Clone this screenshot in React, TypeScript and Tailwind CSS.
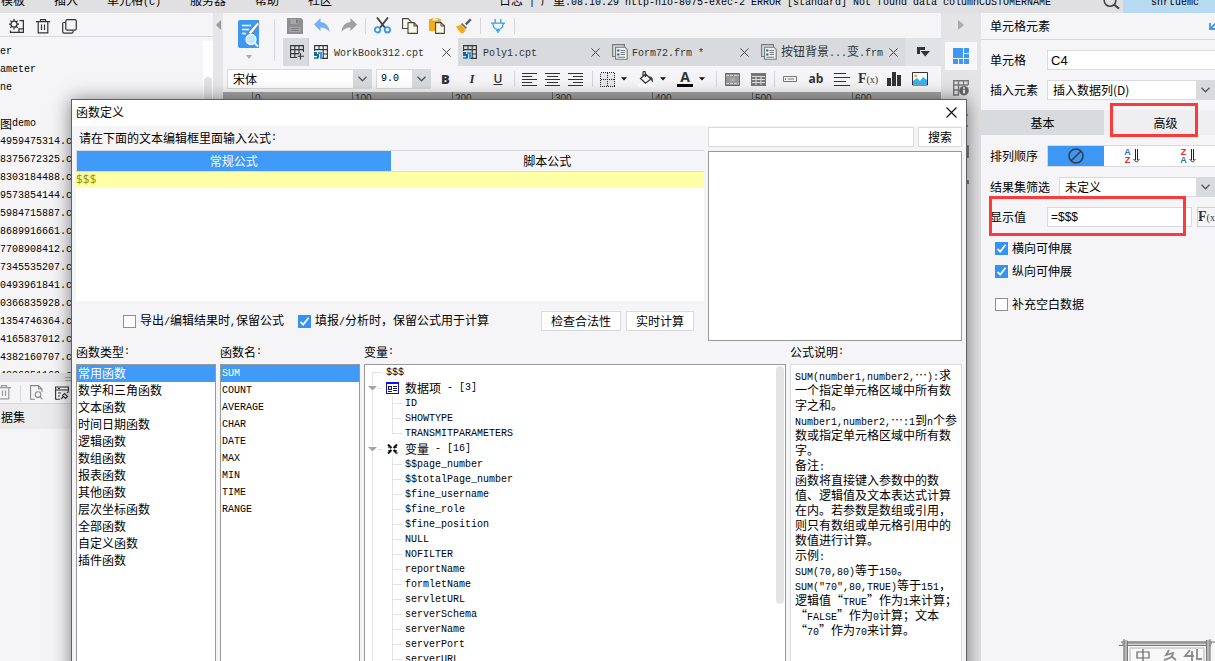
import React, { useState } from 'react';

/** Sets ASCII runs in a half-width face beside the full-width CJK text. */
function T({ s }: { s: string }) {
  return (
    <>
      {s.split(/([\x20-\x7e]+)/).map((part, i) =>
        i % 2 ? (
          <span key={i} className="whitespace-pre font-['Liberation_Mono',monospace] text-[10px]">{part}</span>
        ) : (
          part
        ),
      )}
    </>
  );
}

function Cross({ size = 9, color = '#444' }: { size?: number; color?: string }) {
  return (
    <svg width={size} height={size} viewBox="0 0 10 10" stroke={color} strokeWidth="1.1" fill="none">
      <path d="M.5 .5 9.5 9.5M9.5 .5 .5 9.5" />
    </svg>
  );
}

function Chevron() {
  return (
    <svg width="9" height="6" viewBox="0 0 9 6" fill="none" stroke="#555" strokeWidth="1.3">
      <path d="M.5 .8 4.5 4.8 8.5 .8" />
    </svg>
  );
}

function Drop({ label, value, className, mono }: { label: string; value: string; className: string; mono?: boolean }) {
  return (
    <div className={`flex h-5 items-stretch border border-[#d8dadd] bg-white ${className}`}>
      <select
        aria-label={label}
        className={
          mono
            ? "min-w-0 flex-1 appearance-none bg-white pl-1 font-['Liberation_Mono',monospace] text-[10px] text-black outline-none"
            : 'min-w-0 flex-1 appearance-none bg-white pl-[5px] text-black outline-none'
        }
      >
        <option>{value}</option>
      </select>
      <span className="flex w-[18px] shrink-0 items-center justify-center bg-[#d8dadd]">
        <Chevron />
      </span>
    </div>
  );
}

function Check({ label, on, className }: { label: string; on?: boolean; className?: string }) {
  const [checked, setChecked] = useState(!!on);
  return (
    <label className={`flex items-center gap-1 whitespace-nowrap ${className ?? ''}`}>
      <span className="grid size-[13px] shrink-0">
        <input
          type="checkbox"
          checked={checked}
          onChange={() => setChecked(!checked)}
          className="size-[13px] appearance-none border border-[#8f8f8f] bg-white [grid-area:1/1] checked:border-[#3492f0] checked:bg-[#3492f0]"
        />
        {checked && (
          <svg width="13" height="13" viewBox="0 0 13 13" className="pointer-events-none [grid-area:1/1]" fill="none" stroke="#fff" strokeWidth="1.7">
            <path d="M2.5 6.8 5.2 9.6 10.6 2.8" />
          </svg>
        )}
      </span>
      <span><T s={label} /></span>
    </label>
  );
}

function Trash({ color = '#333' }: { color?: string }) {
  return (
    <svg width="14" height="15" viewBox="0 0 14 15" fill="none" stroke={color} strokeWidth="1.2">
      <path d="M0 2.6H14M4.5 2.5V.6H9.5V2.5M2.2 2.6V13.9H11.8V2.6M5.5 5.5V11M8.5 5.5V11" />
    </svg>
  );
}

function BookIcon() {
  return (
    <svg width="14" height="14" viewBox="0 0 14 14" fill="none">
      <path d="M.6 6V.6H13.4V13.4H8M.6 4.6H13.4M9 9H13.4M5 .6V5M9.2 .6V13.4" stroke="#333" strokeWidth="1.1" />
      <path d="M0 7H3V11H0Z" fill="#1a66a8" />
      <path d="M4 7H8V14H6V9H4ZM0 12H3V14H0Z" fill="#3599db" />
      <path d="M3 9H5V13L3 14Z" fill="#1a66a8" />
    </svg>
  );
}

function FormIcon() {
  return (
    <svg width="16" height="16" viewBox="0 0 16 16" fill="none">
      <path d="M3.5 12.5H.6V.6H12.4V3" stroke="#777" strokeWidth="1.1" />
      <path d="M3.6 3.2H13L15.2 5.4V15.3H3.6Z" fill="#f1f1f1" stroke="#777" strokeWidth="1.1" />
      <path d="M5.2 5.5H7.4V7.5H5.2ZM5.2 9.5H7.4V11.5H5.2Z" fill="#1a66a8" />
      <path d="M8.6 6.5H13M8.6 8.5H13M8.6 10.5H13M5.5 13.2H13" stroke="#777" strokeWidth="1" />
    </svg>
  );
}

function GridPlus() {
  return (
    <svg width="14" height="15" viewBox="0 0 14 15" fill="none" stroke="#333" strokeWidth="1.1">
      <path d="M7 12.5H.6V.6H13.4V7M.6 4.6H13.4M.6 8.6H9M4.8 .6V12.5M9 .6V8.6M10.5 8V14.5M7.5 11.3H14" />
    </svg>
  );
}

function Lines({ d }: { d: string }) {
  return (
    <svg width="15" height="13" viewBox="0 0 15 13" stroke="#333" strokeWidth="1" shapeRendering="crispEdges">
      <path d={d} />
    </svg>
  );
}

function Sep({ className }: { className: string }) {
  return (
    <span className={`flex shrink-0 justify-center ${className}`}>
      <span className="h-4 w-px bg-[#d5d6d9]" />
    </span>
  );
}

function Tool({ label, className, children }: { label: string; className: string; children: React.ReactNode }) {
  return (
    <button aria-label={label} className={`flex h-6 shrink-0 items-center justify-center text-[#333] ${className}`}>
      {children}
    </button>
  );
}

function More({ label }: { label: string }) {
  return (
    <Tool label={label} className="w-[13px]">
      <svg width="6" height="4" viewBox="0 0 6 4"><path d="M0 .3H6L3 3.6Z" fill="#111" /></svg>
    </Tool>
  );
}

const tree = ['er', 'ameter', 'ne', '', '图demo', '4959475314.cpt', '8375672325.cpt', '8303184488.cpt', '9573854144.cpt', '5984715887.cpt', '8689916661.cpt', '7708908412.cpt', '7345535207.cpt', '0493961841.cpt', '0366835928.cpt', '1354746364.cpt', '4165837012.cpt', '4382160707.cpt', '4396851169.cpt'];
const types = ['常用函数', '数学和三角函数', '文本函数', '时间日期函数', '逻辑函数', '数组函数', '报表函数', '其他函数', '层次坐标函数', '全部函数', '自定义函数', '插件函数'];
const names = ['SUM', 'COUNT', 'AVERAGE', 'CHAR', 'DATE', 'MAX', 'MIN', 'TIME', 'RANGE'];
const fields = ['ID', 'SHOWTYPE', 'TRANSMITPARAMETERS'];
const variables = ['$$page_number', '$$totalPage_number', '$fine_username', '$fine_role', '$fine_position', 'NULL', 'NOFILTER', 'reportName', 'formletName', 'servletURL', 'serverSchema', 'serverName', 'serverPort', 'serverURL'];
const notes = [
  'SUM(number1,number2,…):求', '一个指定单元格区域中所有数', '字之和。', 'Number1,number2,…:1到n个参', '数或指定单元格区域中所有数', '字。', '备注:',
  '函数将直接键入参数中的数', '值、逻辑值及文本表达式计算', '在内。若参数是数组或引用，', '则只有数组或单元格引用中的', '数值进行计算。', '示例:', 'SUM(70,80)等于150。',
  'SUM("70",80,TRUE)等于151，', '逻辑值“TRUE”作为1来计算；', '“FALSE”作为0计算；文本', '“70”作为70来计算。',
];

function Header() {
  return (
    <header className="flex h-[13px] shrink-0 overflow-hidden bg-[#e0e0e2] whitespace-nowrap">
      <nav className="-mt-1.5 flex h-3 w-[499px] shrink-0 gap-[29px] pl-px leading-3">
        {['模板', '插入', '单元格(C)', '服务器', '帮助', '社区'].map((m) => (
          <a key={m} href="#" className="block"><T s={m} /></a>
        ))}
      </nav>
      <p className="-mt-1.5 flex h-3 min-w-0 flex-1 leading-3">
        <span className="w-[30px]">日志</span>
        <span className="w-3"><T s="|" /></span>
        <span><T s="严重.08.10.29 http-nio-8075-exec-2 ERROR [standard] Not found data columnCUSTOMERNAME" /></span>
      </p>
      <button aria-label="搜索" className="w-5 shrink-0">
        <svg width="18" height="13" viewBox="0 0 18 13" fill="none" stroke="#444" strokeWidth="1.6">
          <circle cx="7" cy="0.5" r="5.8" />
          <path d="M11 4.5 16 8.6" strokeWidth="2.2" />
        </svg>
      </button>
      <a href="#" className="flex w-[92px] shrink-0 justify-center bg-[#b6daf2] pl-3">
        <span className="-mt-1.5 h-3 leading-3"><T s="snrtuemc" /></span>
      </a>
    </header>
  );
}

function LeftPanel() {
  return (
    <aside className="flex w-[213px] shrink-0 flex-col bg-[#f5f5f7]">
      <div className="flex h-6 shrink-0 items-center gap-3 border-b border-[#d5d6d9] pt-1 pl-[9px]">
        <button aria-label="设置">
          <svg width="15" height="15" viewBox="0 0 15 15" fill="none" stroke="#333" strokeWidth="1.3">
            <circle cx="5" cy="5.2" r="3" />
            <path d="M5 0V2M5 8.4V10.4M0 5.2H2M8 5.2H10M1.4 1.6 2.9 3.1M7.1 7.3 8.6 8.8M8.6 1.6 7.1 3.1M1.4 8.8 2.9 7.3M10.5 1.6H14.4V13.4H1.5V11.5" />
            <path d="M10 13.4V9.8H14" />
          </svg>
        </button>
        <button aria-label="删除"><Trash /></button>
        <button aria-label="复制">
          <svg width="15" height="15" viewBox="0 0 15 15" fill="none" stroke="#333" strokeWidth="1.2">
            <rect x="3.8" y=".7" width="10.5" height="10.5" rx="1.5" />
            <path d="M3.5 3.5H2.2Q.7 3.5 .7 5V12.6Q.7 14.2 2.2 14.2H9.6Q11.2 14.2 11.2 12.6V11.4" />
          </svg>
        </button>
      </div>
      <div className="flex h-[336px] shrink-0 overflow-hidden pt-1">
        <ul className="min-w-0 flex-1 pt-0.5">
          {tree.map((t, i) => (
            <li key={i} className="flex h-[18px] items-center whitespace-nowrap text-black"><T s={t} /></li>
          ))}
        </ul>
        <div className="w-2.5 bg-white pt-9">
          <div className="mx-auto h-40 w-2 rounded bg-[#e3e3e5]" />
        </div>
      </div>
      <div className="flex h-[9px] shrink-0 bg-[#e6e6e8] pl-[65px]">
        <svg width="12" height="9" viewBox="0 0 12 9" stroke="#aaa"><path d="M0 4.5H12M0 7.5H12" /></svg>
      </div>
      <div className="flex h-[22px] shrink-0 items-center border-b border-[#d5d6d9]">
        <button aria-label="删除数据集" className="-ml-[3px]"><Trash color="#999" /></button>
        <Sep className="w-[19px]" />
        <button aria-label="预览数据集">
          <svg width="13" height="15" viewBox="0 0 13 15" fill="none" stroke="#888" strokeWidth="1.1">
            <path d="M5 14.3H.6V.6H8.5L12 4V7M8.5 .6V4H12" />
            <circle cx="8" cy="9.6" r="2.8" /><path d="M10 11.8 12.4 14.3" />
          </svg>
        </button>
        <button aria-label="连接" className="ml-3">
          <svg width="14" height="14" viewBox="0 0 14 14" fill="none" stroke="#333" strokeWidth="1.1">
            <path d="M5 13.3H.6V1H13.4V5M.6 4H13.4M3 2.5H5M3 7H6M3 10H5" />
            <path d="M6 13 8 11M12 7 13.6 5.4M7.5 9.5 10.5 12.5 12.5 10.5 9.5 7.5Z" />
          </svg>
        </button>
      </div>
      <div className="flex h-[25px] shrink-0 items-center bg-[#ebebed] pl-px">据集</div>
    </aside>
  );
}

const docs = [
  { name: 'WorkBook312.cpt', form: false, active: true },
  { name: 'Poly1.cpt', form: false, active: false },
  { name: 'Form72.frm *', form: true, active: false },
  { name: '按钮背景...变.frm', form: true, active: false },
];

function Toolbars() {
  return (
    <main className="flex min-w-0 flex-1 flex-col overflow-hidden bg-[#f5f5f7]">
      <div className="flex h-[53px] shrink-0">
        <div className="flex w-[51px] shrink-0 flex-col items-center gap-[7px] pt-[7px]">
          <button aria-label="预览">
            <svg width="22" height="28" viewBox="0 0 22 28" fill="none">
              <path d="M0 2Q0 0 2 0H21V28H2Q0 28 0 26Z" fill="#3d97f5" />
              <path d="M4 5.5H13M4 9.5H11M4 13.5H8" stroke="#fff" strokeWidth="1.6" />
              <path d="M10 13 18 3.5 20.5 1.5 21 4.5 13 14.5Z" fill="#fff" stroke="#777" strokeWidth=".9" />
              <circle cx="13" cy="19.5" r="5" fill="#bfe4fb" stroke="#f7f7f7" strokeWidth="1.3" />
              <path d="M16.8 23.2 20 26.5" stroke="#eee" strokeWidth="2" />
            </svg>
          </button>
          <svg width="6" height="4" viewBox="0 0 6 4"><path d="M0 0H6L3 4Z" fill="#aaa" /></svg>
        </div>
        <div className="mt-1.5 h-[42px] w-px shrink-0 bg-[#d5d6d9]" />
        <div className="flex min-w-0 flex-1 flex-col">
          <div className="flex h-[25px] shrink-0 items-center pl-[6px]">
            <Tool label="保存" className="w-[27px]">
              <svg width="16" height="16" viewBox="0 0 16 16"><path d="M0 0H14L16 2V16H0Z" fill="#8e8e91" /><path d="M3.5 1H11.5V6H3.5ZM2.5 9H13.5V14H2.5Z" fill="#a7a7aa" /><path d="M9 1.5H10.7V5.3H9Z" fill="#77777a" /><path d="M4 10.5H12M4 12.5H12" stroke="#7c7c7f" /></svg>
            </Tool>
            <Tool label="撤销" className="w-[27px]">
              <svg width="16" height="15" viewBox="0 0 16 15"><path d="M6.5 0V4Q14.5 4.5 15.6 14 12 9.3 6.5 9.5V13L0 6.5Z" fill="#74b1f0" /></svg>
            </Tool>
            <Tool label="重做" className="w-[27px]">
              <svg width="16" height="15" viewBox="0 0 16 15"><path d="M9.5 0V4Q1.5 4.5 .4 14 4 9.3 9.5 9.5V13L16 6.5Z" fill="#a0a0a3" /></svg>
            </Tool>
            <Sep className="w-[7px]" />
            <Tool label="剪切" className="w-[27px]">
              <svg width="17" height="17" viewBox="0 0 17 17" fill="none"><path d="M3 .5 11.2 11M14 .5 5.8 11" stroke="#444" strokeWidth="1.9" /><circle cx="3.6" cy="12.8" r="2.7" stroke="#3599f0" strokeWidth="1.8" /><circle cx="13.4" cy="12.8" r="2.7" stroke="#3599f0" strokeWidth="1.8" /></svg>
            </Tool>
            <Tool label="复制" className="w-[27px]">
              <svg width="16" height="16" viewBox="0 0 16 16" fill="#fef8e6" stroke="#444" strokeWidth="1.1"><path d="M.6 .6H6L9 3.6V10.5H.6Z" /><path d="M6 4.6H12L15.4 8V15.4H6Z" /><path d="M12 4.6V8H15.4" fill="none" /></svg>
            </Tool>
            <Tool label="粘贴" className="w-[27px]">
              <svg width="16" height="16" viewBox="0 0 16 16"><path d="M0 1H12V13H0Z" fill="#f5ab13" /><path d="M3 0H9V3H3Z" fill="#fff3cf" stroke="#c98b10" strokeWidth=".6" /><path d="M6.6 4.6H12L15.4 8V15.4H6.6Z" fill="#fef8e6" stroke="#444" strokeWidth="1.1" /><path d="M12 4.6V8H15.4" fill="none" stroke="#444" /></svg>
            </Tool>
            <Tool label="格式刷" className="w-[27px]">
              <svg width="16" height="16" viewBox="0 0 16 16"><path d="M9 5.5 14 .5 15.6 2 10.7 7.2Z" fill="#555962" /><path d="M6.2 5 11 9.8 9.8 11 5 6.2Z" fill="#666b75" /><path d="M4.6 6.5 9.6 11.5Q8.5 15.5 5.5 15.6 2 13 0 8Q3 8 4.6 6.5Z" fill="#f5ab13" /></svg>
            </Tool>
            <Sep className="w-[7px]" />
            <Tool label="连接" className="w-[27px]">
              <svg width="14" height="14" viewBox="0 0 14 14" fill="none" stroke="#3aa0e0" strokeWidth="1.3"><path d="M4.2 0V3.4M9.8 0V3.4M0 4.2H14M2 4.2V6Q2.5 10 7 10.3 11.5 10 12 6V4.2M7 10.3V14M5 11.6H9" /></svg>
            </Tool>
            <Sep className="w-[7px]" />
          </div>
          <div className="ml-2 flex h-7 shrink-0 bg-[#e1e2e5]">
            <button aria-label="新建" className="flex w-[26px] shrink-0 items-center justify-end border-r border-[#c9cacd] bg-[#d8dadd] pr-1"><GridPlus /></button>
            {docs.map((d) => (
              <div key={d.name} className={`flex w-[149px] shrink-0 items-center pr-[7px] pl-[5px] whitespace-nowrap ${d.active ? 'bg-[#f5f5f7]' : 'bg-[#d8dadd]'}`}>
                <span className="flex w-5 shrink-0 items-center">{d.form ? <FormIcon /> : <BookIcon />}</span>
                <a href="#" className="flex-1 text-[#333]"><T s={d.name} /></a>
                <button aria-label="关闭" className="shrink-0"><Cross size={9} /></button>
              </div>
            ))}
            <button aria-label="文档列表" className="ml-3">
              <svg width="13" height="10" viewBox="0 0 13 10"><path d="M0 0H8V3H3V7H0Z" fill="#333" /><path d="M3.5 4H13L8.2 9.5Z" fill="#333" /></svg>
            </button>
          </div>
        </div>
      </div>
      <div className="flex h-[26px] shrink-0 items-center pl-1">
        <Drop label="字体" value="宋体" className="w-[145px] shrink-0" />
        <Drop label="字号" value="9.0" mono className="ml-1 w-[55px] shrink-0" />
        <Tool label="加粗" className="ml-px w-[27px]"><b className="font-['Open_Sans',sans-serif] text-[13px] font-extrabold">B</b></Tool>
        <Tool label="斜体" className="w-[26px]"><i className="font-['Liberation_Serif',serif] text-[13px] font-bold">I</i></Tool>
        <Tool label="下划线" className="w-[26px]"><u className="font-['Open_Sans',sans-serif] text-xs font-semibold">U</u></Tool>
        <Sep className="w-[7px]" />
        <Tool label="左对齐" className="w-[23px]"><Lines d="M0 .5H15M0 3.5H10M0 6.5H15M0 9.5H10M0 12.5H15" /></Tool>
        <Tool label="居中" className="w-[23px]"><Lines d="M0 .5H15M2 3.5H13M0 6.5H15M2 9.5H13M0 12.5H15" /></Tool>
        <Tool label="右对齐" className="w-[23px]"><Lines d="M0 .5H15M5 3.5H15M0 6.5H15M5 9.5H15M0 12.5H15" /></Tool>
        <Sep className="w-[10px]" />
        <Tool label="边框" className="w-5">
          <svg width="15" height="15" viewBox="0 0 15 15" fill="#e6e6e8" stroke="#222" strokeDasharray="1 1" shapeRendering="crispEdges"><path d="M.5 .5H14.5V14.5H.5Z" /><path d="M7.5 1V14M1 7.5H14" /></svg>
        </Tool>
        <More label="边框选项" />
        <Tool label="填充" className="w-[26px] pl-1.5">
          <svg width="16" height="16" viewBox="0 0 16 16" fill="none"><path d="M0 12.5H16V16H0Z" fill="#fff" /><path d="M7.5 3 13 8 7.5 12.3 2.5 7.5ZM5 5V1.5Q5 .5 6.2 .5T7.4 1.8V6" stroke="#333" strokeWidth="1.2" /><path d="M11 5Q16 6 14.7 11.5 13 10 13 7.5Z" fill="#333" /></svg>
        </Tool>
        <More label="填充选项" />
        <Tool label="字体颜色" className="w-[26px] pl-1.5">
          <span className="flex h-4 w-4 justify-center border-b-3 border-black font-['Open_Sans',sans-serif] text-[14px] leading-3 font-bold">A</span>
        </Tool>
        <More label="颜色选项" />
        <Sep className="ml-[3px] w-[10px]" />
        <Tool label="合并单元格" className="w-[22px]">
          <svg width="15" height="13" viewBox="0 0 15 13"><path d="M.5 .5H14.5V12.5H.5Z" fill="#999" stroke="#666" /><path d="M1 2.5H14M1 10.5H14" stroke="#d5d5d5" strokeDasharray="3 1" /><path d="M5 5H10V8.5H5Z" fill="#aaa" /></svg>
        </Tool>
        <Tool label="取消合并" className="ml-1 w-[22px]">
          <svg width="15" height="13" viewBox="0 0 15 13"><path d="M0 0H15V13H0Z" fill="#777" /><path d="M1 3.5H14M1 6.5H14M1 9.5H14M5 3V12M10 3V12" stroke="#dedede" /></svg>
        </Tool>
        <Sep className="w-[10px]" />
        <Tool label="文本框" className="w-[22px]">
          <svg width="14" height="6" viewBox="0 0 14 6" fill="none" stroke="#777"><path d="M.5 .5H13.5V5.5H.5ZM2.5 2V4M5 3H11" /></svg>
        </Tool>
        <Tool label="富文本" className="ml-1 w-[22px]"><b className="font-['Open_Sans',sans-serif] text-xs font-bold">ab</b></Tool>
        <Tool label="段落" className="ml-1 w-[22px]">
          <svg width="16" height="13" viewBox="0 0 16 13" stroke="#333" shapeRendering="crispEdges"><path d="M0 .5H12M0 4.5H16M0 8.5H12M0 12.5H16" /></svg>
        </Tool>
        <Tool label="公式" className="ml-1 w-[22px]"><span className="font-['Liberation_Serif',serif] text-[14px] font-bold">F<span className="text-[10px] font-normal">(x)</span></span></Tool>
        <Tool label="图表" className="ml-1 w-[22px]"><svg width="14" height="14" viewBox="0 0 14 14" fill="#333"><path d="M0 6H4V14H0ZM5 0H9V14H5ZM10 3H14V14H10Z" /></svg></Tool>
        <Tool label="图片" className="ml-1 w-[22px]">
          <svg width="16" height="14" viewBox="0 0 16 14"><path d="M.5 .5H15.5V13H.5Z" fill="#fff" stroke="#333" /><path d="M1 12.5V9L5 6 8 9 11 5 15 8V12.5Z" fill="#36b4ee" /><circle cx="3.7" cy="3.7" r="1.5" fill="#f5ab43" /></svg>
        </Tool>
      </div>
      <div className="flex flex-1 bg-[#a6a6a6] pl-[29px]">
        {[0, 100, 200, 300, 400, 500, 600].map((n) => (
          <div key={n} className="flex w-[100px] shrink-0 border-l border-[#666] pt-0.5 pl-0.5 font-['Liberation_Sans',sans-serif] text-[10px] leading-[10px] text-[#333]">{n}</div>
        ))}
      </div>
    </main>
  );
}

function Strip() {
  return (
    <div className="flex w-10 shrink-0 flex-col items-center bg-[#e4e4e6]">
      <svg width="6" height="10" viewBox="0 0 6 10" className="mt-[7px]"><path d="M0 0 6 5 0 10Z" fill="#aaa" /></svg>
      <button aria-label="单元格元素" className="mt-3 flex h-7 w-8 items-center justify-center bg-[#f8f8fa]">
        <svg width="16" height="16" viewBox="0 0 16 16" fill="#3d97f5"><path d="M0 0H10V10H0ZM11 0H16V5H11ZM11 6H16V10H11ZM0 11H5V16H0ZM6 11H10V16H6ZM11 11H16V16H11Z" /></svg>
      </button>
      <button aria-label="单元格属性" className="mt-2.5">
        <svg width="16" height="16" viewBox="0 0 16 16" fill="none" stroke="#777" strokeWidth="1.4"><path d="M6 15H.7V.7H15.3V5M.7 5H15M.7 10H6M5.5 .7V15M10.5 .7V5" /><circle cx="11" cy="10.7" r="4.8" fill="#666" stroke="none" /><path d="M11 9.8V13.5M11 7.2V8.8" stroke="#fff" strokeWidth="1.7" /></svg>
      </button>
      <div className="mt-[18px] flex flex-col items-center gap-[18px]" aria-hidden="true">
        <svg width="16" height="13" viewBox="0 0 16 13" fill="none" stroke="#666" strokeWidth="1.5"><path d="M1 1H15M1 12H15M13 1V12" /></svg>
        <svg width="16" height="13" viewBox="0 0 16 13" fill="none" stroke="#666" strokeWidth="1.5"><path d="M1 1H15V12H1Z" /></svg>
        <svg width="16" height="13" viewBox="0 0 16 13" fill="none" stroke="#666" strokeWidth="1.5"><path d="M1 5H15V8M12 8V12" /></svg>
        <svg width="16" height="13" viewBox="0 0 16 13" fill="#666"><circle cx="9" cy="10" r="3" /></svg>
      </div>
    </div>
  );
}

function SortIcon({ top, bottom }: { top: string; bottom: string }) {
  const color = (c: string) => (c === 'Z' ? 'text-[#e8232b]' : 'text-[#2b78b5]');
  return (
    <span className="flex items-center gap-0.5">
      <span className="flex flex-col font-['Liberation_Sans',sans-serif] text-[9px] leading-[8px] font-bold">
        <span className={color(top)}>{top}</span>
        <span className={color(bottom)}>{bottom}</span>
      </span>
      <svg width="7" height="14" viewBox="0 0 7 14" fill="none" stroke="#222"><path d="M2.5 0V11M4.5 0V11M.5 10 3.5 13.2 6.5 10" /></svg>
    </span>
  );
}

function RightPanel() {
  return (
    <aside className="w-[234px] shrink-0 overflow-hidden bg-[#f5f5f7]">
      <div className="w-[246px]">
        <div className="flex h-[27px] items-center justify-between border-b border-[#d5d6d9] pr-2 pl-[9px]">
          <h2>单元格元素</h2>
          <svg width="10" height="8" viewBox="0 0 10 8" fill="none" stroke="#3d97f5" strokeWidth="1.8"><path d="M1 1V7H7M1 7 8 0" /></svg>
        </div>
        <div className="flex flex-col gap-2.5 pt-2.5 pl-[9px]">
          <label className="flex h-5 items-center">
            <span className="w-[57px] shrink-0">单元格</span>
            <input defaultValue="C4" className="h-5 min-w-0 flex-1 border border-[#d8dadd] bg-white pl-[3px] font-['Liberation_Sans',sans-serif] text-[13px] text-black outline-none" />
          </label>
          <div className="flex h-5 items-center">
            <span className="w-[57px] shrink-0">插入元素</span>
            <Drop label="插入元素" value="插入数据列(D)" className="mr-3 min-w-0 flex-1" />
          </div>
        </div>
        <div className="mt-2.5 flex h-[25px]">
          <button className="w-[123px] bg-[#d8dadd]">基本</button>
          <button className="w-[123px] bg-[#efeff1]">高级</button>
        </div>
        <div className="pl-[9px]">
          <div className="mt-2.5 flex h-[22px] items-center">
            <span className="w-[57px] shrink-0">排列顺序</span>
            <div className="flex h-[22px] flex-1 border border-[#d8dadd] bg-white">
              <button aria-label="不排序" className="flex w-14 items-center justify-center bg-[#3d97f5]">
                <svg width="16" height="16" viewBox="0 0 16 16" fill="none" stroke="#333c48" strokeWidth="1.6"><circle cx="8" cy="8" r="7" /><path d="M3.2 12.8 12.8 3.2" /></svg>
              </button>
              <button aria-label="升序" className="flex w-14 items-center justify-center"><SortIcon top="A" bottom="Z" /></button>
              <button aria-label="降序" className="flex w-14 items-center justify-center"><SortIcon top="Z" bottom="A" /></button>
            </div>
          </div>
          <div className="mt-2.5 flex h-5 items-center">
            <span className="w-[69px] shrink-0">结果集筛选</span>
            <Drop label="结果集筛选" value="未定义" className="mr-3 min-w-0 flex-1" />
          </div>
          <div className="mt-2.5 flex h-5 items-center">
            <label htmlFor="shown" className="w-[57px] shrink-0">显示值</label>
            <input id="shown" defaultValue="=$$$" className="h-5 w-[145px] border border-[#d8dadd] bg-white pl-[3px] font-['Liberation_Sans',sans-serif] text-xs text-black outline-none" />
            <button className="ml-[5px] h-5 flex-1 border border-[#d0d1d4] text-left font-['Liberation_Serif',serif] text-[14px] leading-4 font-bold text-[#333]">F<span className="text-[10px] font-normal">(x)</span></button>
          </div>
          <div className="mt-3 flex flex-col gap-[5px] pl-[5px]">
            <Check label="横向可伸展" on className="h-[18px]" />
            <Check label="纵向可伸展" on className="h-[18px]" />
            <Check label="补充空白数据" className="mt-2.5 h-[18px]" />
          </div>
        </div>
      </div>
    </aside>
  );
}

function RootGutter({ first, arrow }: { first?: boolean; arrow?: boolean }) {
  return (
    <svg width="20" height="16" viewBox="0 0 20 16" className="shrink-0" fill="none" stroke="#e3e3e5" shapeRendering="crispEdges">
      <path d={first ? 'M6.5 16V7.5H16' : arrow ? 'M6.5 0V5M6.5 11V16M11 8.5H16' : 'M6.5 0V16'} />
      {arrow && <path d="M2 6H11L6.5 10.5Z" fill="#a5a5a5" stroke="none" shapeRendering="auto" />}
    </svg>
  );
}

function Leaf({ text, last }: { text: string; last?: boolean }) {
  return (
    <li className="flex h-[15px] items-center overflow-hidden">
      <RootGutter />
      <svg width="19" height="15" viewBox="0 0 19 15" className="shrink-0" fill="none" stroke="#e3e3e5" shapeRendering="crispEdges">
        <path d={last ? 'M6.5 0V7.5H16' : 'M6.5 0V15M6.5 7.5H16'} />
      </svg>
      <T s={text} />
    </li>
  );
}

function Dialog() {
  return (
    <section role="dialog" aria-label="函数定义" className="absolute top-[99px] right-[248px] bottom-0 left-[71px] flex flex-col overflow-hidden border border-b-0 border-[#606060] bg-[#f5f5f7] text-black">
      <div className="flex h-[26px] shrink-0 items-center justify-between bg-white pr-[9px] pb-0.5 pl-1">
        <h1>函数定义</h1>
        <button aria-label="关闭"><Cross size={11} color="#111" /></button>
      </div>
      <div className="flex h-[216px] shrink-0 gap-1 pr-1 pl-1">
        <div className="flex min-w-0 flex-1 flex-col">
          <h2 className="flex h-6 items-center pl-[3px]"><T s="请在下面的文本编辑框里面输入公式:" /></h2>
          <div className="flex h-[22px] border-y border-l border-[#d8dadd]">
            <button className="flex-1 bg-[#3f9af8] pb-px text-white">常规公式</button>
            <button className="flex-1 pb-px">脚本公式</button>
          </div>
          <textarea
            aria-label="公式"
            defaultValue="$$$"
            className="block h-[129px] w-full resize-none bg-[linear-gradient(#ffffa6_16px,#ffffff_16px)] font-['Noto_Sans',sans-serif] text-[12px] leading-4 text-[#a39a00] outline-none"
          />
          <div className="flex h-10 items-center pr-2.5 pl-[47px]">
            <Check label="导出/编辑结果时,保留公式" />
            <Check label="填报/分析时，保留公式用于计算" on className="ml-3.5" />
            <button className="ml-auto h-5 w-20 border border-[#d8dadd] bg-white leading-4">检查合法性</button>
            <button className="ml-[5px] h-5 w-[68px] border border-[#d8dadd] bg-white leading-4">实时计算</button>
          </div>
        </div>
        <div className="flex w-[254px] shrink-0 flex-col gap-1 pt-px">
          <div className="flex h-5 gap-1">
            <input aria-label="搜索函数" className="min-w-0 flex-1 border border-[#d8dadd] bg-white outline-none" />
            <button className="w-11 border border-[#d8dadd] bg-white leading-4">搜索</button>
          </div>
          <div className="h-[190px] border border-[#999] bg-white" />
        </div>
      </div>
      <div className="flex min-h-0 flex-1 gap-1 pr-1 pl-1">
        <div className="flex w-[140px] shrink-0 flex-col">
          <h3 className="flex h-[22px] shrink-0 items-center pb-0.5"><T s="函数类型:" /></h3>
          <ul className="flex-1 border border-b-0 border-[#999] bg-white">
            {types.map((t, i) => (
              <li key={t} className={`h-[17px] pl-px leading-[15px] ${i ? '' : 'bg-[#3f9af8] text-white'}`}>{t}</li>
            ))}
          </ul>
        </div>
        <div className="flex w-[140px] shrink-0 flex-col">
          <h3 className="flex h-[22px] shrink-0 items-center pb-0.5"><T s="函数名:" /></h3>
          <ul className="flex-1 border border-b-0 border-[#999] bg-white">
            {names.map((t, i) => (
              <li key={t} className={`flex h-[17px] items-center pl-px ${i ? '' : 'bg-[#3f9af8] text-white'}`}><T s={t} /></li>
            ))}
          </ul>
        </div>
        <div className="flex min-w-0 flex-1 flex-col">
          <h3 className="flex h-[22px] shrink-0 items-center pb-0.5"><T s="变量:" /></h3>
          <div className="flex min-h-0 flex-1 overflow-hidden border border-b-0 border-[#999] bg-white">
            <ul className="min-w-0 flex-1 pl-px">
              <li className="flex h-[15px] items-center"><RootGutter first /><T s="$$$" /></li>
              <li className="flex h-4 items-center">
                <RootGutter arrow />
                <svg width="13" height="12" viewBox="0 0 13 12" className="mr-1.5 shrink-0" fill="none" shapeRendering="crispEdges"><path d="M.5 1.5H12.5V11.5H.5Z" fill="#fff" stroke="#1212a0" /><path d="M0 1H13" stroke="#1212f0" strokeWidth="2" /><path d="M2.5 4.5H5.5V7.5H2.5Z" fill="#ffee33" stroke="#12127a" /><path d="M7 4.5H11M7 6.5H11M7 8.5H11M2 9.5H6" stroke="#12127a" /></svg>
                <T s="数据项 - [3]" />
              </li>
              {fields.map((f, i) => <Leaf key={f} text={f} last={i === 2} />)}
              <li className="flex h-4 items-center">
                <RootGutter arrow />
                <svg width="13" height="12" viewBox="0 0 13 12" className="mr-1.5 shrink-0" fill="none" stroke="#111" strokeWidth="2"><path d="M2 1.5 5.5 5M11 1.5 7.5 5M2 10.5 5.5 7M11 10.5 7.5 7" /><path d="M2 4 4.5 5M11 4 8.5 5M2 8 4.5 7M11 8 8.5 7" strokeWidth="1" /><path d="M10 9.5 11.5 11M2.5 5 3.5 4" stroke="#2d9b62" strokeWidth="1.2" /></svg>
                <T s="变量 - [16]" />
              </li>
              {variables.map((v) => <Leaf key={v} text={v} />)}
            </ul>
            <div className="mt-px mr-px h-[238px] w-2 shrink-0 rounded bg-[#e4e4e5]" />
          </div>
        </div>
        <div className="flex w-[172px] shrink-0 flex-col">
          <h3 className="flex h-[22px] shrink-0 items-center pb-0.5"><T s="公式说明:" /></h3>
          <div className="flex-1 border border-b-0 border-[#d8dadd] bg-white pt-0.5 pl-1">
            {notes.map((n) => <p key={n} className="h-[15px] leading-[15px] whitespace-nowrap"><T s={n} /></p>)}
          </div>
        </div>
      </div>
    </section>
  );
}

function InputMethodBar() {
  return (
    <div className="absolute right-0 bottom-0 h-[22px] w-24 overflow-hidden">
      <svg width="96" height="22" viewBox="0 0 96 22" fill="none">
        <path d="M8 5H90V22H8Z" fill="#f8f8f8" />
        <path d="M3 4H93" stroke="#aaa" strokeWidth="3" />
        <path d="M0 6.5H92M2 3H96" stroke="#777" />
        <path d="M6.5 1V22M89 1V22" stroke="#b5b5b5" strokeWidth="4" />
        <path d="M5 0V22M8.5 2V22M87.5 1V22M91 0V22" stroke="#777" />
        <path d="M11 9H85M11 9V22M85 9V22" stroke="#d5d5d5" strokeWidth="2" />
        <path d="M18 13H30V19H18ZM24 10V22" stroke="#666" strokeWidth="1.2" />
        <path d="M50 11 47 16 54 14Q54 19 45 21M52 17 57 21" stroke="#8a8a8a" strokeWidth="1.8" />
        <path d="M71 11 66 17H75M73 12V22M78 10V20H83" stroke="#8a8a8a" strokeWidth="1.8" />
      </svg>
    </div>
  );
}

export default function App() {
  return (
    <div lang="zh-CN" className="relative flex h-screen flex-col overflow-hidden bg-[#f5f5f7] font-['Noto_Sans_CJK_SC',sans-serif] text-[12px] leading-4 text-black">
      <Header />
      <div className="flex min-h-0 flex-1">
        <LeftPanel />
        <div className="flex w-2.5 shrink-0 justify-center bg-[#e6e6e8] pt-[7px]">
          <svg width="5" height="10" viewBox="0 0 5 10"><path d="M5 0 0 5 5 10Z" fill="#999" /></svg>
        </div>
        <Toolbars />
        <Strip />
        <RightPanel />
      </div>
      <div className="pointer-events-none absolute top-0 right-[234px] bottom-0 left-0 overflow-hidden">
        <div className="absolute top-[99px] right-[14px] -bottom-5 left-[71px] shadow-[0_1px_18px_rgba(0,0,0,0.5)]" />
      </div>
      <Dialog />
      <div className="pointer-events-none absolute top-[103px] right-[17px] h-[34px] w-[88px] border-3 border-[#fb3a3a]" />
      <div className="pointer-events-none absolute top-[196px] right-[29px] h-10 w-[197px] border-3 border-[#fb3a3a]" />
      <InputMethodBar />
    </div>
  );
}
